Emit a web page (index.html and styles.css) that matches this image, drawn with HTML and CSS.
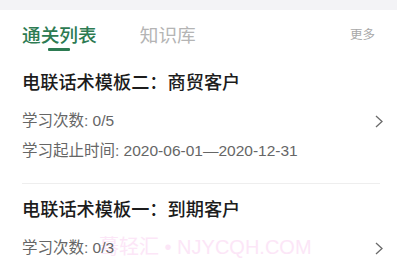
FILE: index.html
```html
<!DOCTYPE html>
<html lang="zh-CN">
<head>
<meta charset="utf-8">
<link rel="stylesheet" href="styles.css">
</head>
<body>
<div class="topbar"></div>
<div class="tabs">
  <div class="tab active">
    <span class="tab-label">通关列表</span>
    <span class="tab-line"></span>
  </div>
  <div class="tab">
    <span class="tab-label">知识库</span>
  </div>
  <div class="more">更多</div>
</div>
<div class="watermark">蓦轻汇 • NJYCQH.COM</div>
<div class="list">
  <div class="item">
    <div class="title">电联话术模板二：商贸客户</div>
    <div class="meta row">
      <span>学习次数: 0/5</span>
      <svg class="chev" width="8" height="13" viewBox="0 0 8 13"><polyline points="1,1 7,6.5 1,12" fill="none" stroke="#6a6a6a" stroke-width="1.3"/></svg>
    </div>
    <div class="meta second">学习起止时间: 2020-06-01—2020-12-31</div>
  </div>
  <div class="item last">
    <div class="title">电联话术模板一：到期客户</div>
    <div class="meta row">
      <span>学习次数: 0/3</span>
      <svg class="chev" width="8" height="13" viewBox="0 0 8 13"><polyline points="1,1 7,6.5 1,12" fill="none" stroke="#6a6a6a" stroke-width="1.3"/></svg>
    </div>
  </div>
</div>
</body>
</html>
```
FILE: styles.css
```css
html, body {
  margin: 0;
  padding: 0;
  background: #ffffff;
  font-family: "Liberation Sans", "Noto Sans CJK SC", sans-serif;
  width: 397px;
  height: 270px;
  overflow: hidden;
  position: relative;
}
.topbar {
  height: 10px;
  background: #f3f3f6;
}
.tabs {
  display: flex;
  align-items: flex-start;
  padding: 14px 22px 0 22px;
  height: 27px;
}
.tab {
  display: flex;
  flex-direction: column;
  align-items: center;
  margin-right: 43px;
}
.tab-label {
  font-size: 18.7px;
  line-height: 20px;
  color: #b4b4b4;
  font-family: "Noto Sans CJK SC", sans-serif;
}
.tab.active .tab-label {
  color: #2d7b52;
  font-weight: 500;
}
.tab-line {
  margin-top: 4px;
  width: 22px;
  height: 3px;
  background: #2d7b52;
  border-radius: 1px;
}
.more {
  margin-left: auto;
  margin-right: 0;
  font-size: 12.5px;
  line-height: 20px;
  color: #a8a8a8;
  font-family: "Noto Sans CJK SC", sans-serif;
}
.watermark {
  position: absolute;
  left: 99px;
  top: 237px;
  font-size: 20px;
  line-height: 20px;
  color: #fce6f7;
  white-space: nowrap;
  z-index: 0;
}
.list {
  position: relative;
  z-index: 1;
  padding: 0 17px 0 22px;
}
.item {
  padding: 18px 0 22px 0;
  border-bottom: 1px solid #eeeeee;
}
.item.last {
  border-bottom: none;
  padding-top: 12px;
}
.title {
  font-size: 18.2px;
  line-height: 24px;
  color: #1c1c1c;
  font-weight: 500;
  font-family: "Noto Sans CJK SC", sans-serif;
}
.meta {
  font-size: 15.5px;
  line-height: 20px;
  color: #666666;
}
.row {
  display: flex;
  justify-content: space-between;
  align-items: center;
  margin-top: 18px;
}
.second {
  margin-top: 10px;
}
.chev {
  margin-right: -3px;
}
```
